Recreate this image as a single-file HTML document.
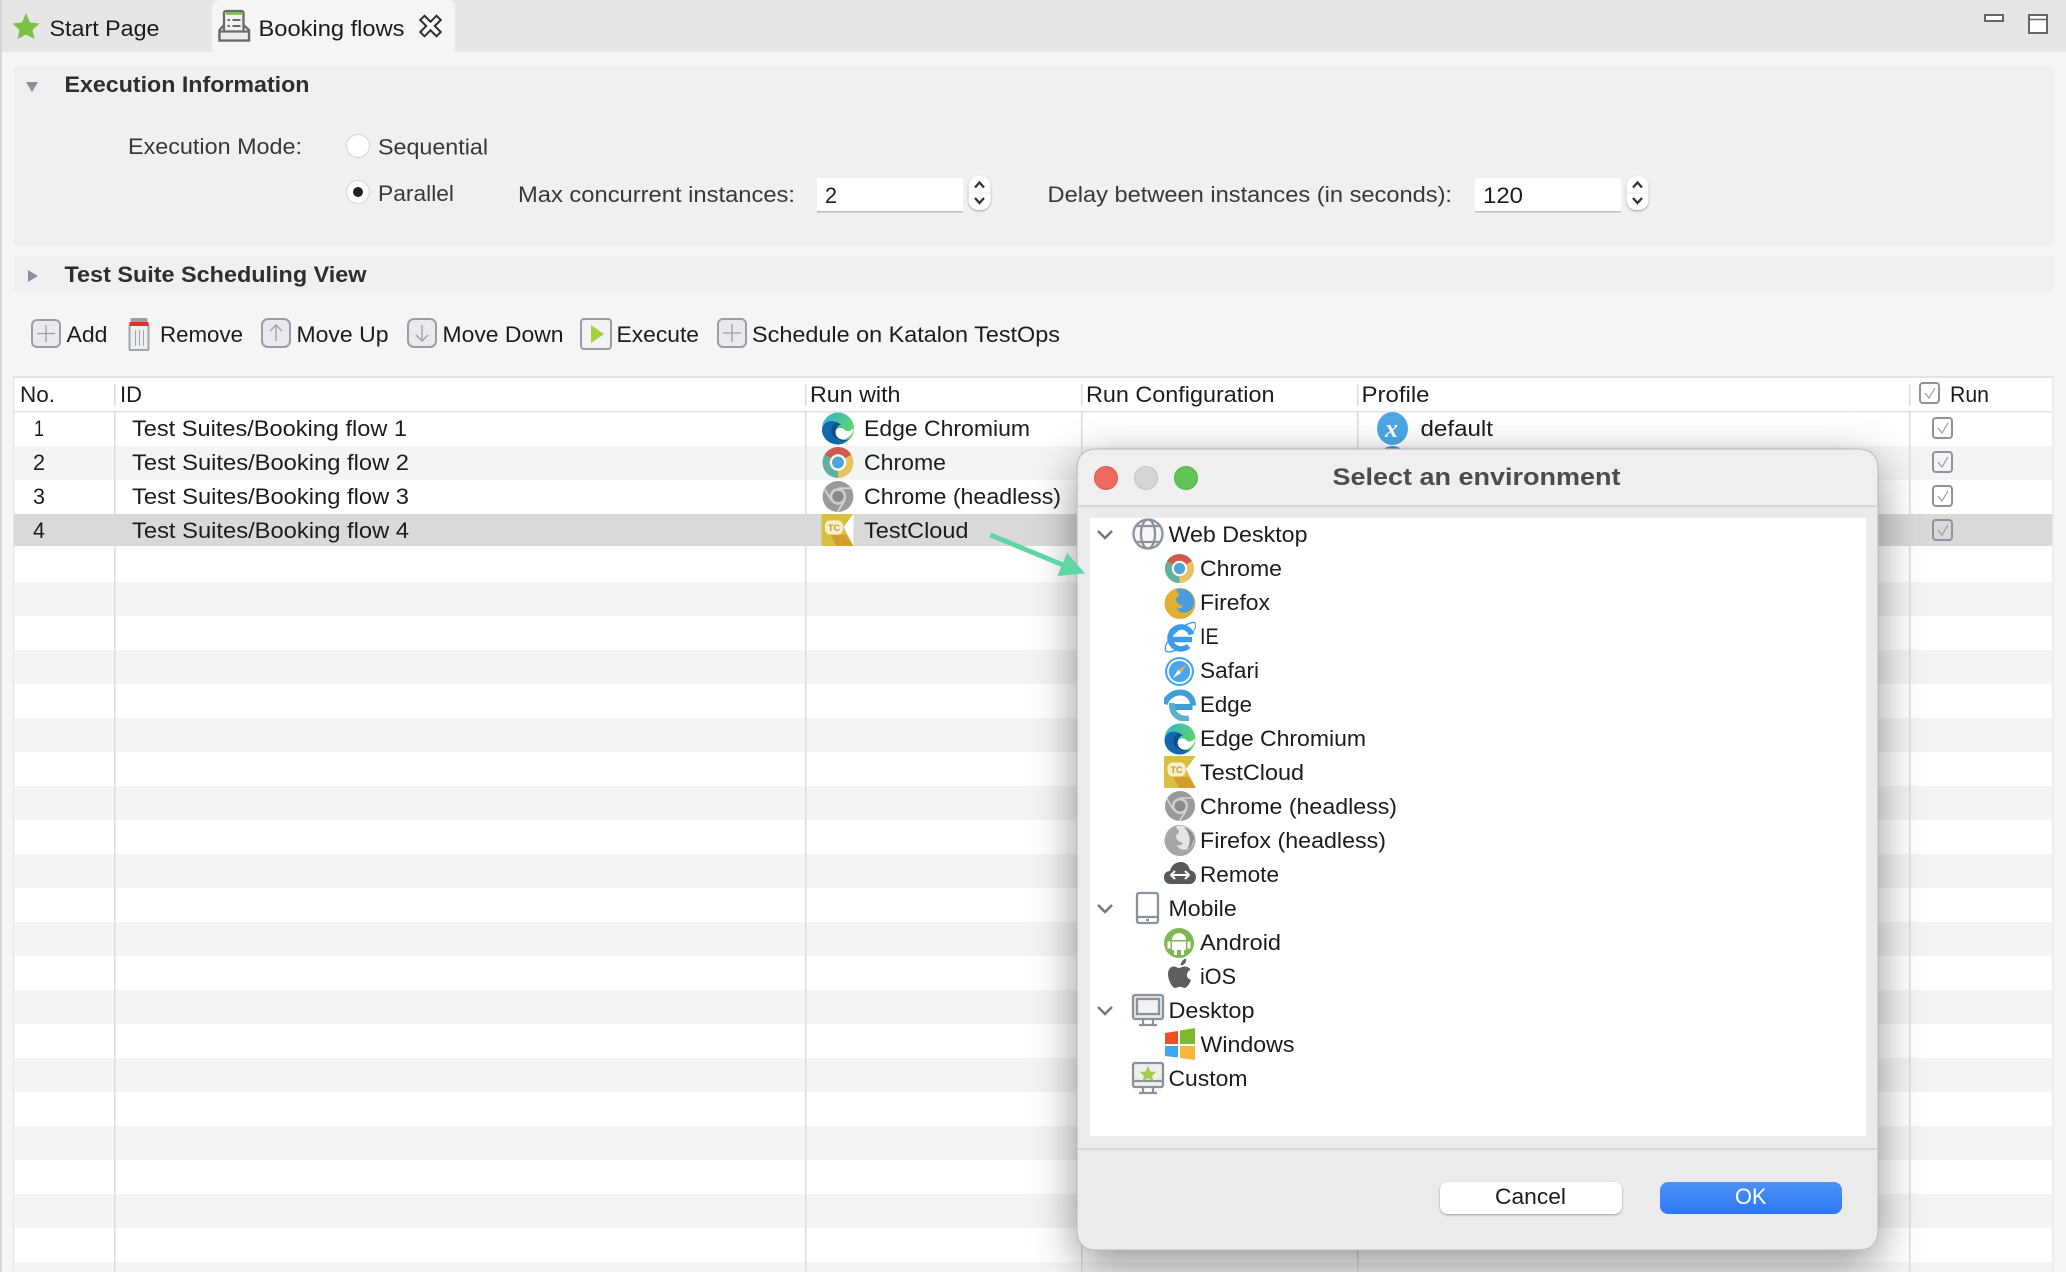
<!DOCTYPE html>
<html lang="en"><head><meta charset="utf-8"><title>Booking flows</title>
<style>
html,body{margin:0;padding:0;background:#f5f5f5;width:2066px;height:1272px;overflow:hidden}
svg{display:block}
text{font-family:"Liberation Sans",sans-serif;font-size:22.5px;fill:#1c1c1c}
.b{font-weight:bold;fill:#2e2e2e;font-size:22px}
.l{fill:#383838}
</style></head><body>
<svg xmlns="http://www.w3.org/2000/svg" width="2066" height="1272" viewBox="0 0 2066 1272">
<defs>
<filter id="sh" x="-20%" y="-20%" width="140%" height="140%"><feDropShadow dx="0" dy="14" stdDeviation="22" flood-color="#000" flood-opacity=".42"/></filter>
<filter id="s2" x="-30%" y="-30%" width="160%" height="170%"><feDropShadow dx="0" dy="1" stdDeviation="1" flood-color="#000" flood-opacity=".35"/></filter>
<linearGradient id="ok" x1="0" y1="0" x2="0" y2="1"><stop offset="0" stop-color="#4c92f6"/><stop offset="1" stop-color="#2e77f5"/></linearGradient>
<linearGradient id="eg" x1="0" y1="0" x2="1" y2=".6"><stop offset="0" stop-color="#2fb4dc"/><stop offset="1" stop-color="#62d55f"/></linearGradient>
<symbol id="chrome" viewBox="0 0 32 32"><path d="M16 16L3 8.500A15 15 0 0 1 29 8.500Z" fill="#cf5a4f"/><path d="M16 16L29 8.500A15 15 0 0 1 16 31Z" fill="#e8c362"/><path d="M16 16L16 31A15 15 0 0 1 3 8.500Z" fill="#5fb09d"/><circle cx="16" cy="16" r="8" fill="#fff"/><circle cx="16" cy="16" r="5.800" fill="#4fa5d4"/></symbol>
<symbol id="chromeg" viewBox="0 0 32 32"><circle cx="16" cy="16" r="15" fill="#9a9a9a"/><path d="M16 8H30M22.500 20L15.500 31M9.500 20L2.500 8" stroke="#d6d6d6" stroke-width="1.600"/><circle cx="16" cy="16" r="8" fill="#cfcfcf"/><circle cx="16" cy="16" r="5.500" fill="#8a8a8a"/></symbol>
<symbol id="firefox" viewBox="0 0 32 32"><circle cx="16" cy="16.500" r="15.500" fill="#e0b032"/><path d="M12 2.500C20 0 29 4 30 14C31 19 28 23 24 25C18 27 14 24 12.500 21C16 22 18 21 19 19C15 18 11 15 12 11C14 10 15 9 15 6.500C13.500 6 12.500 4.500 12 2.500Z" fill="#4b9cdf"/></symbol>
<symbol id="firefoxg" viewBox="0 0 32 32"><circle cx="16" cy="16.500" r="15.500" fill="#a6a6a6"/><path d="M12 2.500C20 0 29 4 30 14C31 19 28 23 24 25C18 27 14 24 12.500 21C16 22 18 21 19 19C15 18 11 15 12 11C14 10 15 9 15 6.500C13.500 6 12.500 4.500 12 2.500Z" fill="#e6e6e6"/><path d="M20 3C27 5 30 10 30 15C29 21 26 24 23 25C27 19 27 11 20 3Z" fill="#8f8f8f"/></symbol>
<symbol id="ie" viewBox="0 0 32 32"><path d="M31 1.500C26 1 19 5 12 11C5 17 0 25 1.500 29.500C3 32 8 31 12 29" fill="none" stroke="#3c9cec" stroke-width="1.300"/><path d="M31 1.500C33 5 30 10 28 12" fill="none" stroke="#3c9cec" stroke-width="1"/><path d="M6.500 18.500H28M27.500 13.500A11 11 0 1 0 24.500 25" fill="none" stroke="#3c9cec" stroke-width="5.500"/></symbol>
<symbol id="safari" viewBox="0 0 32 32"><circle cx="16" cy="16" r="15" fill="#4aa5ec"/><circle cx="16" cy="16" r="12.800" fill="#fff"/><circle cx="16" cy="16" r="11" fill="#4aa5ec"/><path d="M23 9L17.500 17.500L14.500 14.500Z" fill="#eeb04a"/><path d="M9 23L14.500 14.500L17.500 17.500Z" fill="#fff"/></symbol>
<symbol id="edge" viewBox="0 0 32 32"><path d="M7.500 18H28.500M29 16.500C29 8 23 3.500 16.500 3.500C9 3.500 3 8 .5 15" fill="none" stroke="#3f9fd4" stroke-width="6"/><path d="M8 14C7 24 14 31 25 29.500" fill="none" stroke="#5bb0cc" stroke-width="6"/></symbol>
<symbol id="edgec" viewBox="0 0 32 32"><circle cx="16" cy="16" r="15.500" fill="url(#eg)"/><path d="M.5 17C2 9 9 7 15 10C10 12 8 17 10 22C13 28 20 29 27 26C23 30 19 31.500 16 31.500C7 31.500 .5 25 .5 17Z" fill="#1366b0"/><path d="M15 10C10 12 8 17 10 22C12.500 27 19 28.500 24 27.500C18 27 13 24 14 18C14.500 15 16 13 19 12.500C18 11.500 16.500 10.500 15 10Z" fill="#0c4f92"/><path d="M14 17.500C15.500 15 20 14.500 22 17C24 19.500 28 19 31 15.500C31 21 26 26 21 26.500C16 27 12.500 22 14 17.500Z" fill="#fff"/></symbol>
<symbol id="tc" viewBox="0 0 32 32"><rect width="32" height="32" fill="#d8c13f"/><path d="M9 21H24.500L32 32H15Z" fill="#d89b30"/><path d="M32 0L22 13L32 32V0Z" fill="#fff"/><rect x="3.500" y="6.500" width="18" height="14" rx="5.500" fill="#f7f0cf"/><text x="6.500" y="17" style="font-size:9px;font-weight:bold;fill:#c99a2c">TC</text></symbol>
</defs>

<!-- background / tabs -->
<rect width="2066" height="1272" fill="#f5f5f5"/>
<rect width="2066" height="52" fill="#e6e6e6"/>
<path d="M212 52V8Q212 0 220 0H447Q455 0 455 8V52Z" fill="#f5f5f5"/>
<rect width="2" height="1272" fill="#d6d6d6"/>
<polygon points="26,13 30,22.500 39.500,23.500 32.500,30 34.500,39 26,34.500 17.500,39 19.500,30 12.500,23.500 22,22.500" fill="#7cc045"/>
<text x="49.500" y="36" textLength="110" lengthAdjust="spacingAndGlyphs">Start Page</text>
<rect x="224" y="11" width="19.500" height="22" rx="2" fill="#f2f2f2" stroke="#6a6a6a" stroke-width="2.300"/>
<rect x="226" y="12" width="16" height="2.800" fill="#7cc045"/>
<path d="M232.500 20H240.500M232.500 26H240.500M227.500 20H230M227.500 26H230" stroke="#6a6a6a" stroke-width="2" fill="none"/>
<path d="M224 25L219.500 30V40.500H249V30L243.500 25" fill="none" stroke="#6a6a6a" stroke-width="2.300"/>
<path d="M219.500 31.500H249V40.500H219.500Z" fill="#ededed" stroke="#6a6a6a" stroke-width="2.300"/>
<text x="258.500" y="36" textLength="146" lengthAdjust="spacingAndGlyphs">Booking flows</text>
<path d="M424.500 20L436.500 32M436.500 20L424.500 32" stroke="#2e2e2e" stroke-width="8" stroke-linecap="square" fill="none"/>
<path d="M424.500 20L436.500 32M436.500 20L424.500 32" stroke="#fff" stroke-width="4" stroke-linecap="square" fill="none"/>
<rect x="1985" y="15" width="18" height="6" fill="#fff" stroke="#666" stroke-width="2"/>
<rect x="2029" y="15" width="18" height="18" fill="#fff" stroke="#666" stroke-width="2"/><path d="M2029 19.500H2047" stroke="#666" stroke-width="1.500"/>

<!-- execution info -->
<rect x="14" y="66" width="2040" height="180" fill="#f0f0f0"/>
<rect x="14" y="256" width="2040" height="36" fill="#f0f0f0"/>
<polygon points="26,82 38,82 32,92" fill="#8b929c"/>
<polygon points="28,270 38,276 28,282" fill="#8b929c"/>
<text class="b" x="64.500" y="92" textLength="245" lengthAdjust="spacingAndGlyphs">Execution Information</text>
<text class="b" x="64.500" y="282" textLength="302" lengthAdjust="spacingAndGlyphs">Test Suite Scheduling View</text>
<text class="l" x="128" y="154" textLength="174" lengthAdjust="spacingAndGlyphs">Execution Mode:</text>
<circle cx="358" cy="146" r="11.500" fill="#fff" stroke="#d4d4d4"/>
<text class="l" x="378" y="154.500" textLength="110" lengthAdjust="spacingAndGlyphs">Sequential</text>
<circle cx="358" cy="192" r="11.500" fill="#fff" stroke="#d4d4d4"/><circle cx="358" cy="192" r="5" fill="#222"/>
<text class="l" x="378" y="201" textLength="76" lengthAdjust="spacingAndGlyphs">Parallel</text>
<text class="l" x="518" y="202" textLength="277" lengthAdjust="spacingAndGlyphs">Max concurrent instances:</text>
<rect x="817" y="178" width="146" height="34" fill="#fff"/><rect x="817" y="211" width="146" height="1.500" fill="#bdbdbd"/>
<text x="825" y="203" textLength="12" lengthAdjust="spacingAndGlyphs">2</text>
<rect x="968.500" y="176" width="22" height="34" rx="10" fill="#fff" filter="url(#s2)"/>
<path d="M968.500 193H990.500" stroke="#e5e5e5"/><path d="M975 187.500L979.500 182.500L984 187.500M975 198L979.500 203L984 198" fill="none" stroke="#333" stroke-width="2.300"/>
<text class="l" x="1047.500" y="202" textLength="404.500" lengthAdjust="spacingAndGlyphs">Delay between instances (in seconds):</text>
<rect x="1475" y="178" width="146" height="34" fill="#fff"/><rect x="1475" y="211" width="146" height="1.500" fill="#bdbdbd"/>
<text x="1483" y="203" textLength="40" lengthAdjust="spacingAndGlyphs">120</text>
<rect x="1626.500" y="176" width="22" height="34" rx="10" fill="#fff" filter="url(#s2)"/>
<path d="M1626.500 193H1648.500" stroke="#e5e5e5"/><path d="M1633 187.500L1637.500 182.500L1642 187.500M1633 198L1637.500 203L1642 198" fill="none" stroke="#333" stroke-width="2.300"/>

<!-- toolbar -->
<g fill="#eaeaee" stroke="#9a9ea6" stroke-width="2">
<rect x="32" y="320" width="28" height="27" rx="5"/>
<rect x="262" y="319" width="28" height="28" rx="6"/>
<rect x="408" y="319" width="28" height="28" rx="6"/>
<rect x="581" y="319" width="30" height="30" rx="3" fill="#f2f2f2"/>
<rect x="718" y="319" width="28" height="28" rx="5"/>
</g>
<path d="M46 325V342M37 333.500H55M732 324V342M723 333H741" stroke="#9a9ea6" stroke-width="1.300"/>
<path d="M276 341V325M270 331L276 325L282 331M422 325V341M416 335L422 341L428 335" fill="none" stroke="#9a9ea6" stroke-width="1.300"/>
<polygon points="591,325 604,334 591,343" fill="#a6cf3c"/>
<g><rect x="129.500" y="325" width="19" height="25" rx="1" fill="#eceef0" stroke="#a0a4ab" stroke-width="2"/><rect x="130.500" y="318" width="17" height="4" rx="1" fill="#9a9ea6"/><rect x="129.500" y="322" width="19" height="4" fill="#d9332c"/><path d="M135.500 330V346M139.500 330V346M143.500 330V346" stroke="#a0a4ab"/></g>
<text x="66.500" y="342" textLength="41" lengthAdjust="spacingAndGlyphs">Add</text>
<text x="160" y="342" textLength="83" lengthAdjust="spacingAndGlyphs">Remove</text>
<text x="296.500" y="342" textLength="92" lengthAdjust="spacingAndGlyphs">Move Up</text>
<text x="442.500" y="342" textLength="121" lengthAdjust="spacingAndGlyphs">Move Down</text>
<text x="616.500" y="342" textLength="82.500" lengthAdjust="spacingAndGlyphs">Execute</text>
<text x="752" y="342" textLength="308" lengthAdjust="spacingAndGlyphs">Schedule on Katalon TestOps</text>

<!-- table -->
<rect x="14" y="376" width="2038" height="896" fill="#fff"/>
<rect x="13" y="376" width="2040" height="2" fill="#e4e4e4"/>
<rect x="13" y="376" width="1.500" height="896" fill="#e6e6e6"/><rect x="2052" y="376" width="1.500" height="896" fill="#ececec"/>
<rect x="14" y="411" width="2038" height="1.500" fill="#e4e4e4"/>
<g fill="#f3f4f4">
<rect x="14" y="446" width="2038" height="34"/><rect x="14" y="582" width="2038" height="34"/><rect x="14" y="650" width="2038" height="34"/><rect x="14" y="718" width="2038" height="34"/><rect x="14" y="786" width="2038" height="34"/><rect x="14" y="854" width="2038" height="34"/><rect x="14" y="922" width="2038" height="34"/><rect x="14" y="990" width="2038" height="34"/><rect x="14" y="1058" width="2038" height="34"/><rect x="14" y="1126" width="2038" height="34"/><rect x="14" y="1194" width="2038" height="34"/><rect x="14" y="1262" width="2038" height="10"/>
</g>
<rect x="14" y="514" width="2038" height="32" fill="#d9d9d9"/>
<g fill="#dcdcdc"><rect x="114" y="384" width="1.500" height="888"/><rect x="805" y="384" width="1.500" height="888"/><rect x="1081" y="384" width="1.500" height="888"/><rect x="1357" y="384" width="1.500" height="888"/><rect x="1909" y="384" width="1.500" height="888"/></g>
<rect x="114" y="406" width="1.500" height="5" fill="#fff"/><rect x="805" y="406" width="1.500" height="5" fill="#fff"/><rect x="1081" y="406" width="1.500" height="5" fill="#fff"/><rect x="1357" y="406" width="1.500" height="5" fill="#fff"/><rect x="1909" y="406" width="1.500" height="5" fill="#fff"/>

<text x="20" y="402" textLength="35" lengthAdjust="spacingAndGlyphs">No.</text>
<text x="120" y="402" textLength="22" lengthAdjust="spacingAndGlyphs">ID</text>
<text x="810" y="402" textLength="90.500" lengthAdjust="spacingAndGlyphs">Run with</text>
<text x="1086" y="402" textLength="188.500" lengthAdjust="spacingAndGlyphs">Run Configuration</text>
<text x="1361.500" y="402" textLength="68" lengthAdjust="spacingAndGlyphs">Profile</text>
<text x="1950" y="402" textLength="39" lengthAdjust="spacingAndGlyphs">Run</text>

<text x="34" y="436" textLength="10" lengthAdjust="spacingAndGlyphs" style="font-weight:normal">1</text>
<text x="33" y="470" textLength="12" lengthAdjust="spacingAndGlyphs">2</text>
<text x="33" y="504" textLength="12" lengthAdjust="spacingAndGlyphs">3</text>
<text x="33" y="538" textLength="12" lengthAdjust="spacingAndGlyphs">4</text>
<text x="132" y="436" textLength="275" lengthAdjust="spacingAndGlyphs">Test Suites/Booking flow 1</text>
<text x="132" y="470" textLength="277" lengthAdjust="spacingAndGlyphs">Test Suites/Booking flow 2</text>
<text x="132" y="504" textLength="277" lengthAdjust="spacingAndGlyphs">Test Suites/Booking flow 3</text>
<text x="132" y="538" textLength="277" lengthAdjust="spacingAndGlyphs">Test Suites/Booking flow 4</text>
<use href="#edgec" x="821.500" y="412" width="33" height="33"/>
<use href="#chrome" x="821.500" y="446" width="33" height="33"/>
<use href="#chromeg" x="821.500" y="480" width="33" height="33"/>
<use href="#tc" x="821.500" y="514" width="32" height="32"/>
<text x="864" y="436" textLength="166" lengthAdjust="spacingAndGlyphs">Edge Chromium</text>
<text x="864" y="470" textLength="82" lengthAdjust="spacingAndGlyphs">Chrome</text>
<text x="864" y="504" textLength="197" lengthAdjust="spacingAndGlyphs">Chrome (headless)</text>
<text x="864" y="538" textLength="104.500" lengthAdjust="spacingAndGlyphs">TestCloud</text>
<ellipse cx="1392.500" cy="428.500" rx="15.500" ry="16.500" fill="#4ba7e5"/>
<text x="1385" y="437" style="font-family:'Liberation Serif',serif;font-style:italic;font-weight:bold;font-size:26px;fill:#fff">x</text>
<text x="1420.500" y="436" textLength="72.500" lengthAdjust="spacingAndGlyphs">default</text>
<ellipse cx="1392.500" cy="462.500" rx="15.500" ry="16.500" fill="#3f95d8"/>

<g fill="none" stroke="#8e949d" stroke-width="2">
<rect x="1920" y="383" width="19" height="20" rx="3"/>
<rect x="1933" y="418" width="19" height="20" rx="3"/>
<rect x="1933" y="452" width="19" height="20" rx="3"/>
<rect x="1933" y="486" width="19" height="20" rx="3"/>
<rect x="1933" y="520" width="19" height="20" rx="3"/>
</g>
<path d="M1925 393L1929 398L1935 388M1938 428L1942 433L1948 423M1938 462L1942 467L1948 457M1938 496L1942 501L1948 491M1938 530L1942 535L1948 525" fill="none" stroke="#9a9a9a" stroke-width="1.200"/>

<!-- dialog -->
<path d="M1097 449H1858Q1878 449 1878 469V1230Q1878 1250 1858 1250H1097Q1077 1250 1077 1230V469Q1077 449 1097 449Z" fill="#ebebeb" stroke="#b8b8b8" filter="url(#sh)"/>
<path d="M1078 506V469Q1078 450 1097 450H1858Q1877 450 1877 469V506Z" fill="#f0eeef"/>
<rect x="1078" y="505.500" width="799" height="1.500" fill="#d0d0d0"/>
<circle cx="1106" cy="478" r="11.500" fill="#ef6a5e" stroke="#dc5b50"/>
<circle cx="1146" cy="478" r="11.500" fill="#d6d4d5" stroke="#c4c2c3"/>
<circle cx="1186" cy="478" r="11.500" fill="#60c554" stroke="#52b447"/>
<text x="1332.500" y="485" textLength="288" lengthAdjust="spacingAndGlyphs" style="font-size:24.500px;font-weight:bold;fill:#4d4b4c">Select an environment</text>
<rect x="1090" y="518" width="776" height="618" fill="#fff"/>
<rect x="1078" y="1148" width="799" height="2" fill="#d6d6d6"/>
<rect x="1440" y="1182" width="182" height="32" rx="8" fill="#fff" filter="url(#s2)"/>
<text x="1495" y="1204" textLength="71" lengthAdjust="spacingAndGlyphs">Cancel</text>
<rect x="1660" y="1182" width="182" height="32" rx="8" fill="url(#ok)"/>
<text x="1735" y="1204" textLength="31.500" lengthAdjust="spacingAndGlyphs" style="fill:#fff">OK</text>

<!-- tree -->
<g fill="none" stroke="#777" stroke-width="2.500"><path d="M1098 531L1105 538L1112 531M1098 905L1105 912L1112 905M1098 1007L1105 1014L1112 1007"/></g>
<g fill="none" stroke="#8a929c" stroke-width="2.300">
<circle cx="1148" cy="534" r="14.500" fill="#f6f6f6"/><ellipse cx="1148" cy="534" rx="7" ry="14.500"/><path d="M1136 526H1160M1136 542H1160"/>
<rect x="1137" y="893" width="21" height="30" rx="2" fill="#fff"/><path d="M1137 917H1158M1146 920H1149"/>
<rect x="1133" y="995" width="30" height="24" rx="2" fill="#e9e9e9"/><rect x="1137" y="999" width="22" height="15" fill="#f2f2f2"/><path d="M1143 1020V1025M1153 1020V1025M1139 1025H1157"/>
<rect x="1133" y="1063" width="30" height="24" rx="2" fill="#eef0ee"/><path d="M1133 1081H1163M1143 1088V1093M1153 1088V1093M1139 1093H1157"/>
</g>
<polygon points="1148,1066 1150.500,1071.500 1156,1072 1152,1076 1153.500,1081 1148,1078.500 1142.500,1081 1144,1076 1140,1072 1145.500,1071.500" fill="#a6cc4d"/>

<use href="#chrome" x="1164" y="553" width="31" height="31"/>
<use href="#firefox" x="1164" y="587" width="32" height="32"/>
<use href="#ie" x="1164" y="621" width="32" height="32"/>
<use href="#safari" x="1164" y="656" width="31" height="31"/>
<use href="#edge" x="1164" y="689" width="32" height="32"/>
<use href="#edgec" x="1164" y="723" width="32" height="32"/>
<use href="#tc" x="1164" y="756" width="32" height="32"/>
<use href="#chromeg" x="1164" y="790" width="32" height="32"/>
<use href="#firefoxg" x="1164" y="824" width="32" height="32"/>
<path d="M1171 884C1166 884 1164 881 1164 877C1164 873 1167 871 1170 871C1171 866 1175 862 1181 862C1186 862 1189 866 1190 870C1194 871 1196 874 1196 877C1196 881 1193 884 1190 884Z" fill="#585858"/>
<path d="M1172 875H1188M1175 871L1171 875L1175 879M1185 871L1189 875L1185 879" fill="none" stroke="#fff" stroke-width="2"/>
<circle cx="1179" cy="943" r="15" fill="#7fb852"/>
<path d="M1172 940A7 7 0 0 1 1186 940ZM1172 941.500H1186V950H1172ZM1167.500 941.500h3v7h-3ZM1187.500 941.500h3v7h-3ZM1174 950h3v5h-3ZM1181 950h3v5h-3Z" fill="#fff"/>
<path d="M1187 975C1187 971.500 1190 970 1190.500 969.500C1189 967 1186 966.500 1185 966.500C1182.500 966.300 1180.500 968 1179 968C1177.500 968 1175.500 966.400 1173.500 966.500C1171 966.500 1168 969 1168 974C1168 980 1172 988 1175.500 988C1177 988 1178 986.800 1180 986.800C1182 986.800 1183 988 1184.500 988C1187 988 1190 983 1191 980C1188.500 979 1187 977.500 1187 975Z" fill="#5e5e5e"/>
<path d="M1184.500 964C1186 962 1186.500 960 1186 958.500C1184 959 1181 961 1180.500 965.500C1182 965.500 1183.500 965 1184.500 964Z" fill="#5e5e5e"/>
<polygon points="1165,1033 1178,1031 1178,1044 1165,1044" fill="#ee5024"/>
<polygon points="1180,1030.500 1195,1028 1195,1044 1180,1044" fill="#7fba2c"/>
<polygon points="1165,1046 1178,1046 1178,1057.500 1165,1056" fill="#41a5ee"/>
<polygon points="1180,1046 1195,1046 1195,1060 1180,1058" fill="#f6b63e"/>

<text x="1168.500" y="542" textLength="139" lengthAdjust="spacingAndGlyphs">Web Desktop</text>
<text x="1200" y="576" textLength="82" lengthAdjust="spacingAndGlyphs">Chrome</text>
<text x="1200" y="610" textLength="70" lengthAdjust="spacingAndGlyphs">Firefox</text>
<text x="1200" y="644" textLength="18.700" lengthAdjust="spacingAndGlyphs">IE</text>
<text x="1200" y="678" textLength="59" lengthAdjust="spacingAndGlyphs">Safari</text>
<text x="1200" y="712" textLength="52" lengthAdjust="spacingAndGlyphs">Edge</text>
<text x="1200" y="746" textLength="166" lengthAdjust="spacingAndGlyphs">Edge Chromium</text>
<text x="1200" y="780" textLength="104" lengthAdjust="spacingAndGlyphs">TestCloud</text>
<text x="1200" y="814" textLength="197" lengthAdjust="spacingAndGlyphs">Chrome (headless)</text>
<text x="1200" y="848" textLength="186" lengthAdjust="spacingAndGlyphs">Firefox (headless)</text>
<text x="1200" y="882" textLength="79" lengthAdjust="spacingAndGlyphs">Remote</text>
<text x="1168.500" y="916" textLength="68.200" lengthAdjust="spacingAndGlyphs">Mobile</text>
<text x="1200" y="950" textLength="81" lengthAdjust="spacingAndGlyphs">Android</text>
<text x="1200" y="984" textLength="36" lengthAdjust="spacingAndGlyphs">iOS</text>
<text x="1168.500" y="1018" textLength="86" lengthAdjust="spacingAndGlyphs">Desktop</text>
<text x="1200.500" y="1052" textLength="94" lengthAdjust="spacingAndGlyphs">Windows</text>
<text x="1168.500" y="1086" textLength="79" lengthAdjust="spacingAndGlyphs">Custom</text>

<!-- arrow -->
<path d="M990.500 535L1068 567" stroke="#5fd6a4" stroke-width="5" fill="none"/>
<polygon points="1085,573.500 1057.500,576 1067,553" fill="#5fd6a4"/>
</svg>
</body></html>
